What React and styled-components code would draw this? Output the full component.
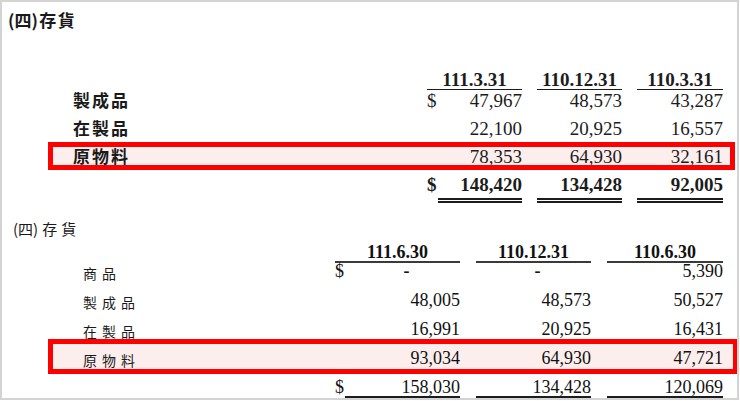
import React from "react";
import styled, { createGlobalStyle, css } from "styled-components";

const GlobalStyle = createGlobalStyle`
  html, body {
    margin: 0;
    padding: 0;
    background: #ffffff;
  }
`;

// each block of the scan has slightly different metrics
const layouts = {
  first: {
    left: 46,
    width: 687,
    indent: 25,
    cols: "339px 95px 85px 86px",
    gap: 15,
    font: 19,
    pad: "5px 0 4px",
    headTop: 40,
    headPull: -4,
    rule: "1px solid #1c1c1c",
    markOffset: -5,
    labelSize: 17,
    labelSpacing: 2,
    labelWeight: 700,
    labelShift: -1,
    dollar: 11,
    totalPad: 4,
    ink: "#1c1c1c",
  },
  second: {
    left: 49,
    width: 684,
    indent: 32,
    cols: "236px 125px 115px 116px",
    gap: 16,
    font: 18,
    pad: "7px 0 2px",
    headTop: 5,
    headPull: -8,
    rule: "2px solid #3a3a3a",
    markOffset: -2,
    labelSize: 14,
    labelSpacing: 5,
    labelWeight: 400,
    labelShift: 2,
    dollar: 10,
    totalPad: 0,
    ink: "#111111",
  },
};

const Frame = styled.div`
  box-sizing: border-box;
  width: 739px;
  height: 400px;
  border: 2px solid #d3d3d3;
  padding-top: 8px;
  background: #ffffff;
  overflow: hidden;
`;

const Title = styled.div`
  font-family: "Noto Sans CJK TC", "Liberation Serif", serif;
  font-size: ${(p) => p.$size}px;
  line-height: ${(p) => p.$lh}px;
  font-weight: ${(p) => p.$weight};
  color: #1a1a1a;
  margin: ${(p) => p.$top}px 0 0 ${(p) => p.$left}px;
`;

// the spacing sits after the closing bracket and between the ideographs
const Glyphs = styled.span`
  letter-spacing: ${(p) => p.$spacing}px;
`;

const Table = styled.div`
  margin-left: ${(p) => p.$l.left}px;
  width: ${(p) => p.$l.width}px;
  font-family: "Liberation Serif", "Times New Roman", serif;
  font-size: ${(p) => p.$l.font}px;
  line-height: ${(p) => p.$l.font}px;
  color: ${(p) => p.$l.ink};
`;

const Row = styled.div`
  box-sizing: border-box;
  display: grid;
  grid-template-columns: ${(p) => p.$l.cols};
  column-gap: ${(p) => p.$l.gap}px;
  align-items: start;
  padding: ${(p) => p.$l.pad};
  padding-left: ${(p) => p.$l.indent}px;
  ${(p) =>
    p.$mark &&
    css`
      background: #fdeeee;
      outline: 5px solid #ff0000;
      outline-offset: ${p.$l.markOffset}px;
    `}
`;

const HeadRow = styled(Row)`
  padding-top: 0;
  padding-bottom: 0;
  margin-top: ${(p) => p.$l.headTop}px;
  margin-bottom: ${(p) => p.$l.headPull}px;
  position: relative;
  z-index: 1;
`;

const HeadCell = styled.div`
  text-align: center;
  font-weight: 700;
  border-bottom: ${(p) => p.$l.rule};
`;

const Label = styled.div`
  font-family: "Noto Sans CJK TC", "Noto Sans CJK SC", sans-serif;
  font-size: ${(p) => p.$l.labelSize}px;
  letter-spacing: ${(p) => p.$l.labelSpacing}px;
  font-weight: ${(p) => p.$l.labelWeight};
  margin-top: ${(p) => p.$l.labelShift}px;
  color: #1a1a1a;
  white-space: nowrap;
`;

const Cell = styled.div`
  display: flex;
  align-items: flex-start;
  font-weight: ${(p) => (p.$bold ? 700 : 400)};
`;

const Dollar = styled.span`
  flex: none;
  width: ${(p) => p.$l.dollar}px;
`;

const Amount = styled.span`
  flex: 1;
  text-align: ${(p) => (p.$dash ? "center" : "right")};
  padding-left: ${(p) => (p.$dash ? 8 : 0)}px;
  font-weight: ${(p) => (p.$dash ? 700 : "inherit")};
  ${(p) =>
    p.$total &&
    css`
      padding-bottom: ${p.$l.totalPad}px;
      border-bottom: 5px double #1c1c1c;
    `}
`;

const first = {
  heads: ["111.3.31", "110.12.31", "110.3.31"],
  rows: [
    { label: "製成品", dollar: true, values: ["47,967", "48,573", "43,287"] },
    { label: "在製品", values: ["22,100", "20,925", "16,557"] },
    { label: "原物料", mark: true, values: ["78,353", "64,930", "32,161"] },
    { label: "", dollar: true, total: true, bold: true, values: ["148,420", "134,428", "92,005"] },
  ],
};

const second = {
  heads: ["111.6.30", "110.12.31", "110.6.30"],
  rows: [
    { label: "商品", dollar: true, values: ["-", "-", "5,390"] },
    { label: "製成品", values: ["48,005", "48,573", "50,527"] },
    { label: "在製品", values: ["16,991", "20,925", "16,431"] },
    { label: "原物料", mark: true, values: ["93,034", "64,930", "47,721"] },
    { label: "", dollar: true, total: true, values: ["158,030", "134,428", "120,069"] },
  ],
};

function Schedule({ data, l }) {
  return (
    <Table $l={l}>
      <HeadRow $l={l}>
        <span />
        {data.heads.map((h) => (
          <HeadCell key={h} $l={l}>
            {h}
          </HeadCell>
        ))}
      </HeadRow>
      {data.rows.map((row, i) => (
        <Row key={i} $l={l} $mark={row.mark}>
          <Label $l={l}>{row.label}</Label>
          {row.values.map((v, j) => (
            <Cell key={j} $bold={row.bold}>
              {j === 0 && <Dollar $l={l}>{row.dollar ? "$" : ""}</Dollar>}
              <Amount $l={l} $total={row.total} $dash={v === "-"}>
                {v}
              </Amount>
            </Cell>
          ))}
        </Row>
      ))}
    </Table>
  );
}

export default function App() {
  return (
    <>
      <GlobalStyle />
      <Frame>
        <Title $size={17} $lh={20} $weight={700} $top={0} $left={6}>
          (四<Glyphs $spacing={1.5}>)存貨</Glyphs>
        </Title>
        <Schedule data={first} l={layouts.first} />
        <Title $size={15} $lh={18} $weight={400} $top={13} $left={11}>
          (四<Glyphs $spacing={4}>)存貨</Glyphs>
        </Title>
        <Schedule data={second} l={layouts.second} />
      </Frame>
    </>
  );
}
